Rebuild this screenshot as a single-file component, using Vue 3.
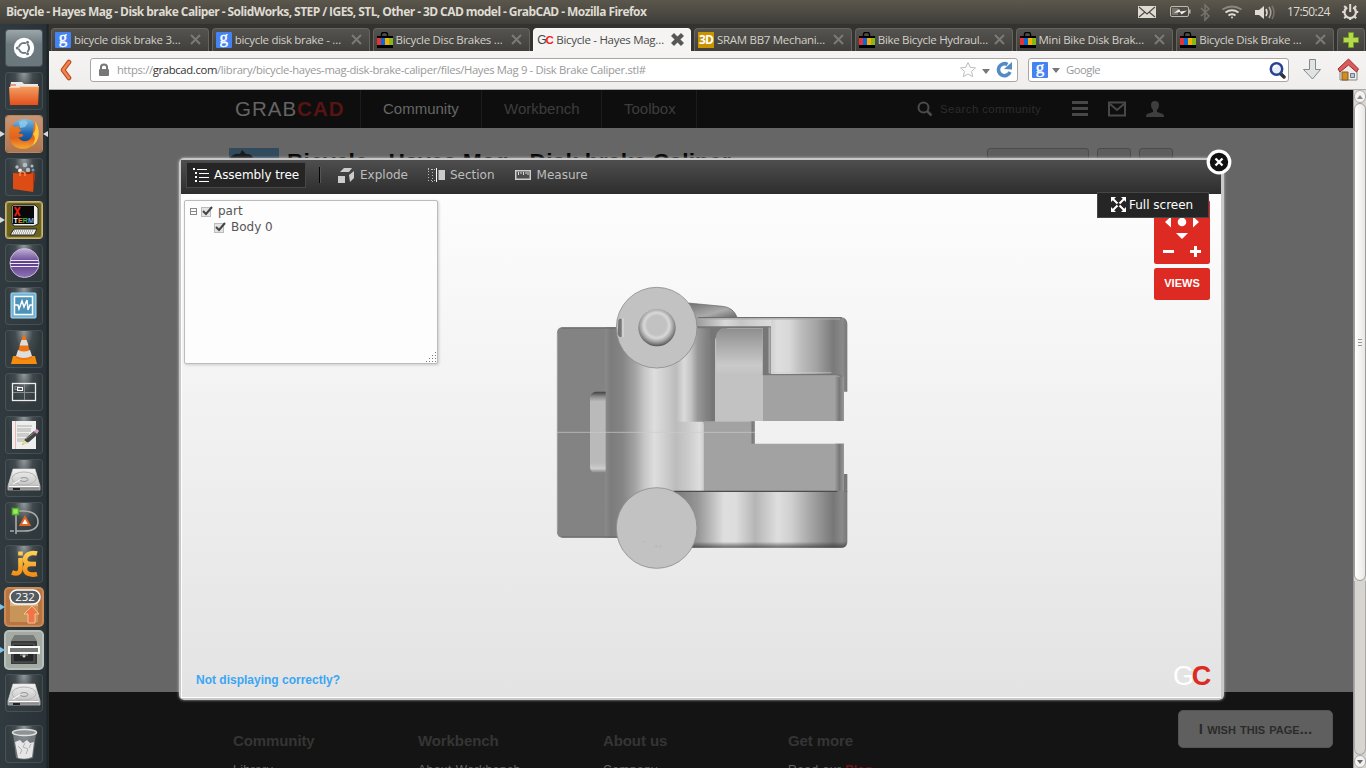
<script setup>
const tabs = [
  { icon: 'g', text: 'bicycle disk brake 3…' },
  { icon: 'g', text: 'bicycle disk brake - …' },
  { icon: 'ebay', text: 'Bicycle Disc Brakes …' },
  { icon: 'gc', text: 'Bicycle - Hayes Mag…', active: true },
  { icon: '3d', text: 'SRAM BB7 Mechani…' },
  { icon: 'ebay', text: 'Bike Bicycle Hydraul…' },
  { icon: 'ebay', text: 'Mini Bike Disk Brak…' },
  { icon: 'ebay', text: 'Bicycle Disk Brake …' },
]

const launcher = [
  { icon: 'ubuntu', tone: 'slate' },
  { icon: 'files' },
  { icon: 'firefox', tone: 'copper', left: 'white', right: true },
  { icon: 'software' },
  { icon: 'xterm', tone: 'olive', left: 'white' },
  { icon: 'eclipse' },
  { icon: 'monitor' },
  { icon: 'vlc' },
  { icon: 'workspace' },
  { icon: 'gedit' },
  { icon: 'disk' },
  { icon: 'librecad' },
  { icon: 'jedit' },
  { icon: 'updates', tone: 'orange', left: 'blue' },
  { icon: 'cabinet', tone: 'pale', left: 'blue' },
  { icon: 'disk' },
  { icon: 'trash', last: true },
]

const footer = [
  { title: 'Community', link: 'Library' },
  { title: 'Workbench', link: 'About Workbench' },
  { title: 'About us', link: 'Company' },
  { title: 'Get more', link: 'Read our', extra: 'Blog' },
]
</script>

<template>
  <div class="desktop">
    <header class="panel">
      <span class="wintitle">Bicycle - Hayes Mag - Disk brake Caliper - SolidWorks, STEP / IGES, STL, Other - 3D CAD model - GrabCAD - Mozilla Firefox</span>
      <svg class="tray" width="228" height="24" viewBox="0 0 228 24">
        <g>
          <rect x="0" y="6" width="18" height="12" fill="#dfdbd2" />
          <path d="M1 7l8 7 8-7M1 17l6-5M17 17l-6-5" fill="none" stroke="#4a4842" stroke-width="1.1" />
        </g>
        <g fill="none" stroke="#bdb9b0">
          <rect x="32.500" y="6.500" width="18" height="10" rx="1.500" />
          <path d="M51.500 9.500v4" stroke-width="2" />
          <rect x="34" y="8" width="6" height="7" fill="#77736b" stroke="none" />
          <path d="M36 13l5-4 1.500 2.500L49 10.500l-5.500 4-1.500-2.500z" fill="#eee" stroke="none" />
        </g>
        <path d="M63 8l8 8-4 4V5l4 4-8 7" fill="none" stroke="#77746a" stroke-width="1.500" />
        <g fill="none" stroke="#dfdbd2" stroke-width="2">
          <path d="M84.500 9.500q9.500-6 19 0" stroke="#8b877e" />
          <path d="M87.500 12.500q6.500-4.500 13 0" />
          <path d="M90.500 15.500q3.500-2.500 7 0" />
          <circle cx="94" cy="17.500" r="1" fill="#dfdbd2" stroke="none" />
        </g>
        <path d="M117 10h4l5-4v13l-5-4h-4z" fill="#dfdbd2" />
        <g fill="none" stroke-width="1.600">
          <path d="M128 9q2 3.500 0 7" stroke="#dfdbd2" />
          <path d="M131 7q3.500 5.500 0 11" stroke="#aaa69d" />
          <path d="M134 6q4 6.500 0 13" stroke="#77746a" />
        </g>
        <g fill="none" stroke="#dfdbd2" transform="translate(.7)">
          <path d="M208.500 7.500a5.700 5.700 0 1 0 6 0" stroke-width="2.200" />
          <path d="M211.500 4v8" stroke-width="2" />
          <path d="M203.500 12h2.500M217 12h2.500M205.500 18.200l2-2M217.500 18.200l-2-2M211.500 20v-2.500M205.500 6l2 2M217.500 6l-2 2" stroke-width="2" />
        </g>
      </svg>
      <time class="clock">17:50:24</time>
    </header>

    <div class="main">
      <nav class="launcher">
        <div v-for="(it, i) in launcher" :key="i" class="tile" :class="[it.tone, { last: it.last }]">
          <i v-if="it.left" class="arrow" :class="it.left"></i>
          <i v-if="it.right" class="arrow-r"></i>
          <svg width="36" height="36" viewBox="0 0 36 36">
            <g v-if="it.icon === 'ubuntu'">
              <circle cx="18" cy="18" r="10.200" fill="#fff" />
              <circle cx="18" cy="18" r="5" fill="none" stroke="#6d7a80" stroke-width="2.200" />
              <g stroke="#fff" stroke-width="1.300"><path d="M18 18h-9M18 18l5 8M18 18l5-8" /></g>
              <circle cx="18" cy="18" r="3.700" fill="#fff" />
              <g fill="#6d7a80"><circle cx="11.300" cy="18" r="1.500" /><circle cx="21.500" cy="12.200" r="1.500" /><circle cx="21.500" cy="23.800" r="1.500" /></g>
            </g>
            <g v-else-if="it.icon === 'files'">
              <path d="M5 9h11l2 2h14v5H4z" fill="#eceae8" />
              <path d="M5 12h5" stroke="#e2472c" />
              <path d="M3 14h10l2-1h18l-1 19H4z" fill="url(#gOrange)" />
              <path d="M3.500 14.500h9.500l2-1h17.500" stroke="#ffd0a4" fill="none" />
            </g>
            <g v-else-if="it.icon === 'firefox'">
              <circle cx="18.500" cy="17" r="14" fill="url(#gBlue)" />
              <path d="M13 6q6-4 9 1l-3 4-5 1z" fill="#9bd3ee" opacity=".7" />
              <path d="M29 6c6 8 5 19-3 24C17 36 5 32 3.500 22 2.500 15 4 11 6 8l2 3 5-1c-1 2 0 3 3 4-1 1-4 2-3 4 3-1 5 1 4 2-2 2-5 1-5 1 3 5 9 6 13 1 3-4 1-8 4-16z" fill="url(#gFox)" />
              <path d="M29 5c6 9 5 20-3 25 3-5 4-8 1-12 3-3 3-8 2-13z" fill="#fcca3c" />
            </g>
            <g v-else-if="it.icon === 'software'">
              <g fill="#b8bcbe"><circle cx="11" cy="8" r="1.700" /><circle cx="19" cy="6" r="2.300" /><circle cx="26" cy="7" r="1.500" /><circle cx="14" cy="11.500" r="2" fill="#eee" /><circle cx="22" cy="11" r="2.200" /><circle cx="27" cy="11" r="1.500" fill="#6d9bc0" /></g>
              <path d="M7 14l20-1 2 2-2 18-20-3z" fill="#dc4c14" />
              <path d="M7 14l20-1-3 2z" fill="#7b280b" />
              <path d="M14 17v-3q2-3 5 0v3" fill="none" stroke="#ff9559" stroke-width="1.300" />
              <path d="M27 14l2 1-2 18z" fill="#a6330a" />
            </g>
            <g v-else-if="it.icon === 'xterm'">
              <path d="M7 3h22l3 3v16l-4 2H8l-2-3V4z" fill="#eee" stroke="#222" />
              <rect x="7" y="4" width="21" height="18" fill="#080808" />
              <path d="M9 5l5 9M14 5l-5 9" stroke="#e81d13" stroke-width="2" />
              <text x="7.500" y="20.500" class="xt"><tspan fill="#fff">T</tspan><tspan fill="#e98b2c">E</tspan><tspan fill="#43b046">R</tspan><tspan fill="#6ca6e0">M</tspan></text>
              <path d="M8 27h23l-3 6H4z" fill="#eee" stroke="#222" />
              <path d="M8 29h20M7 31h20" stroke="#777" stroke-dasharray="1 1" />
            </g>
            <g v-else-if="it.icon === 'eclipse'">
              <circle cx="18.500" cy="18" r="14.500" fill="url(#gPurple)" stroke="#c9b8dc" />
              <path d="M5 15.500h27M4 18.500h29M5 21.500h27" stroke="#eee8f5" stroke-width="1.200" />
            </g>
            <g v-else-if="it.icon === 'monitor'">
              <rect x="5" y="5" width="25" height="25" rx="1" fill="#70b2d4" stroke="#a6dcf4" />
              <rect x="8.500" y="8.500" width="18" height="18" fill="#4c93b9" stroke="#fff" stroke-width="1.500" />
              <path d="M9 17h3l1 4 3-8 2 6 3-7 1 10 2-5h2" fill="none" stroke="#fff" stroke-width="1.500" />
            </g>
            <g v-else-if="it.icon === 'vlc'">
              <path d="M7 25h22l2 8H5z" fill="#f48c0d" />
              <path d="M17 4h2l7 23q-8 4-16 0z" fill="#ee7313" />
              <path d="M15.500 9h5l2 5.500h-9zM12 19q6 3 12 0l2 6q-8 4-16 0z" fill="#dedede" />
            </g>
            <g v-else-if="it.icon === 'workspace'" fill="none" stroke="#c4c6c7">
              <rect x="6.500" y="9.500" width="23" height="17" stroke="#eee" stroke-width="1.300" />
              <path d="M18.500 10v16M7 18.500h22" stroke="#888c8e" />
              <rect x="9" y="12.500" width="4" height="3" stroke="#888" /><rect x="11.500" y="13.500" width="5" height="3" stroke="#fff" />
            </g>
            <g v-else-if="it.icon === 'gedit'">
              <rect x="6" y="4" width="24" height="28" fill="#eeeeec" />
              <path d="M11 9h15M11 12h14M11 14h14M11 17h12M11 19h13M11 22h10M11 24h8" stroke="#999" stroke-width=".8" />
              <path d="M9.500 4v28" stroke="#ef9999" stroke-width=".7" />
              <path d="M16 28l3-6 9-8 4 3-9 8z" fill="#444" /><path d="M16 28l2-5 4 3z" fill="#e8df91" /><path d="M28 14l3-2 2 2-2 3z" fill="#d99bc6" />
              <path d="M20 22l9-7" stroke="#888" />
            </g>
            <g v-else-if="it.icon === 'disk'">
              <path d="M7 9h22l5 17v4H2v-4z" fill="url(#gDisk)" stroke="#ddd" stroke-width=".6" />
              <ellipse cx="18" cy="18.500" rx="12" ry="6.500" fill="none" stroke="#b5b5b5" />
              <ellipse cx="18" cy="19.500" rx="4" ry="2" fill="none" stroke="#999" />
              <path d="M15 19q-4 3-8 5M3 26.500h30" stroke="#fff" fill="none" />
              <path d="M7 29h7" stroke="#222" stroke-width="2" />
            </g>
            <g v-else-if="it.icon === 'librecad'">
              <path d="M10 5v26M10 8h8q14 1 14 10.500T18 28H10M4 28h4M12 8h5" fill="none" stroke="#aaa" stroke-width="1.600" />
              <rect x="6.500" y="5.500" width="6" height="6" fill="#9be86c" stroke="#52b81c" stroke-width="1.500" />
              <path d="M19 14l4.500 8h-9z" fill="#fff" stroke="#df6521" stroke-width="2" />
            </g>
            <g v-else-if="it.icon === 'jedit'" fill="none" stroke="url(#gJe)" stroke-width="4.600">
              <path d="M14.500 12v11q-1 6.500-8.500 3.500" /><path d="M14.500 5.500v4" />
              <path d="M31 7.500c-7-2-12 2-12 6q0 4 5 4.500-5 .5-5 5c0 5 6 6.500 12 5" /><path d="M20 18h10" />
            </g>
            <g v-else-if="it.icon === 'updates'">
              <path d="M4 8h28v25H4z" fill="#c89558" /><path d="M4 8l5-3h18l5 3v9H4z" fill="#dbb37f" />
              <path d="M26 17l7 8h-4v9h-7v-9h-4z" fill="#ef7547" stroke="#fac19b" />
              <rect x="4" y="1" width="30" height="14" rx="7" fill="#555a5f" stroke="#fff" stroke-width="1.500" />
              <text x="19" y="12" class="badge">232</text>
            </g>
            <g v-else-if="it.icon === 'cabinet'">
              <path d="M9 3h18l4 7v22H5V10z" fill="#393b3a" /><path d="M9 3h18l4 6H5z" fill="#777a76" />
              <rect x="7" y="12" width="21" height="18" fill="#252726" stroke="#5a5c5a" />
              <circle cx="18" cy="24" r="1.500" fill="#ddd" /><path d="M14 23h8" stroke="#999" />
              <rect x="3" y="15" width="30" height="6" fill="#777" stroke="#fff" stroke-width="1.900" />
            </g>
            <g v-else>
              <path d="M7 7l3 25q8 3 17 0l3-25z" fill="#a9aeb0" opacity=".5" />
              <ellipse cx="18.500" cy="6.500" rx="12" ry="3" fill="#8d9394" stroke="#e2e2e2" stroke-width="1.500" />
              <path d="M9 16l5-2 3 3 4-3 3 3 4-1-2 15q-6 3-14 1z" fill="#e6e6e6" />
              <path d="M12 20l4 4-2 4M19 17l-2 4 5 2-2 5M25 18l-2 4" fill="none" stroke="#aeb2b2" />
            </g>
          </svg>
        </div>
      </nav>

      <div class="browser">
        <div class="tabs">
          <div v-for="(t, i) in tabs" :key="i" class="tab" :class="{ active: t.active }">
            <span v-if="t.icon === 'g'" class="fav g">g</span>
            <span v-else-if="t.icon === 'gc'" class="fav gcfav">G<b>C</b></span>
            <span v-else-if="t.icon === '3d'" class="fav three">3D</span>
            <svg v-else class="fav" width="16" height="16" viewBox="0 0 16 16">
              <path d="M4.500 5V2.500q0-2 2-2h2q2 0 2 2V5" fill="none" stroke="#000" stroke-width="1.400" />
              <path d="M0 4h16v12H0z" /><path d="M0 6h4v7H0z" fill="#e53238" /><path d="M4 6h4v7H4z" fill="#0968d8" /><path d="M8 6h4v7H8z" fill="#f5af02" /><path d="M12 6h4v7h-4z" fill="#86b817" />
            </svg>
            <span class="label">{{ t.text }}</span>
            <svg class="x" width="13" height="13" viewBox="0 0 13 13">
              <path v-if="t.active" d="M3 3l7 7M10 3l-7 7" stroke="#575757" stroke-width="4.200" stroke-linecap="square" />
              <path v-else d="M2 2l9 9M11 2l-9 9" stroke="#7c7a76" stroke-width="2" />
            </svg>
          </div>
          <div class="newtab">
            <svg width="18" height="18" viewBox="0 0 18 18"><path d="M6.500 1.500h5v5h5v5h-5v5h-5v-5h-5v-5h5z" fill="#b4d84e" stroke="#6f9a1b" /></svg>
          </div>
        </div>

        <div class="nav">
          <svg class="back" width="14" height="22" viewBox="0 0 14 22"><path d="M10 3L4 11l6 8" fill="none" stroke="#b9491c" stroke-width="4.600" stroke-linejoin="round" stroke-linecap="round" /><path d="M10 3L4 11l6 8" fill="none" stroke="#f08650" stroke-width="2.600" stroke-linejoin="round" stroke-linecap="round" /></svg>
          <div class="field url">
            <svg width="12" height="14" viewBox="0 0 12 14"><path d="M3 6V4q0-2.500 3-2.500T9 4v2" fill="none" stroke="#777" stroke-width="2" /><rect x="1" y="6" width="10" height="7" rx="1" fill="#777" /></svg>
            <span class="address">https://<b>grabcad.com</b>/library/bicycle-hayes-mag-disk-brake-caliper/files/Hayes Mag 9 - Disk Brake Caliper.stl#</span>
            <svg class="urlicons" width="54" height="18" viewBox="0 0 54 18">
              <path d="M9 1.500l2.200 4.800 5.300.6-4 3.500 1.200 5.300L9 13l-4.700 2.700 1.200-5.300-4-3.500 5.300-.6z" fill="#fdfdfd" stroke="#bdbdbd" />
              <path d="M23 8h8l-4 5z" fill="#777" />
              <path d="M48.500 3.500A6 6 0 1 0 51 11" fill="none" stroke="#548bc4" stroke-width="3.600" />
              <path d="M45 8l8 .5V1z" fill="#548bc4" />
            </svg>
          </div>
          <div class="field search">
            <span class="fav g">g</span>
            <svg width="8" height="5" viewBox="0 0 8 5"><path d="M0 0h8L4 5z" fill="#777" /></svg>
            <span class="ph">Google</span>
            <svg width="17" height="17" viewBox="0 0 17 17"><path d="M12 12l3 3" stroke="#333" stroke-width="3.500" stroke-linecap="round" /><circle cx="7.500" cy="7" r="5.700" fill="#e7edf7" stroke="#28408f" stroke-width="2.500" /><path d="M4.500 6q1-3 4-2.500" stroke="#fff" fill="none" stroke-width="1.500" /></svg>
          </div>
          <svg class="dl" width="20" height="24" viewBox="0 0 20 24"><path d="M7.500 1.500h6v10h5L10.500 21l-9-9.500h6z" fill="#dfe3e4" stroke="#84898b" stroke-linejoin="round" /></svg>
          <svg class="home" width="24" height="24" viewBox="0 0 24 24">
            <path d="M4 11v11h17V11l-8.500-8z" fill="#ededeb" stroke="#888" />
            <path d="M6 14h6v8H6z" fill="#d28d28" stroke="#8d5c17" /><path d="M14.500 15.500h4v4h-4z" fill="#a9cbe2" stroke="#777" />
            <path d="M12.500 1L2 11l2 3 8.500-7 8 7 2-3z" fill="#d85c5c" stroke="#a42a2e" stroke-linejoin="round" />
          </svg>
        </div>

        <div class="page">
          <div class="content">
            <div class="sitebar">
              <div class="logo"><span>GRAB</span><b>CAD</b></div>
              <a class="item on">Community</a><a class="item wb">Workbench</a><a class="item tb">Toolbox</a>
              <div class="sitesearch">
                <svg width="16" height="16" viewBox="0 0 16 16"><circle cx="6.500" cy="6.500" r="5" fill="none" stroke="#4b4b4b" stroke-width="2" /><path d="M10 10l4.500 4.500" stroke="#4b4b4b" stroke-width="2.500" /></svg>
                <span>Search community</span>
              </div>
              <svg class="siteicons" width="92" height="16" viewBox="0 0 92 16">
                <path d="M0 1.500h16M0 7.500h16M0 13.500h16" stroke="#484848" stroke-width="3" />
                <path d="M37 1.500h16v13H37z" fill="none" stroke="#484848" stroke-width="2" /><path d="M38 3l7 6 7-6" fill="none" stroke="#484848" stroke-width="2" />
                <path d="M83 0q4 0 4 4 0 3-2 5v2l6 2q1 1 1 3H74q0-2 1-3l6-2V9q-2-2-2-5 0-4 4-4z" fill="#3e3e3e" />
              </svg>
            </div>
            <div class="model-head">
              <svg class="thumb" width="50" height="38" viewBox="0 0 50 38"><rect width="50" height="38" rx="1" fill="#314a5c" /><path d="M1 10q4-5 10-4l2-4 4 4q7 0 7 5v10H1z" fill="#17191b" /></svg>
              <h1>Bicycle - Hayes Mag - Disk brake Caliper</h1>
              <div class="ghost"><i class="wide"></i><i></i><i></i></div>
            </div>
            <footer class="foot">
              <section v-for="f in footer" :key="f.title"><h3>{{ f.title }}</h3><p>{{ f.link }} <b v-if="f.extra">{{ f.extra }}</b></p></section>
              <button class="wish">I wish this page...</button>
            </footer>
          </div>
          <div class="scroll">
            <span class="sbtn"><svg width="6" height="4" viewBox="0 0 6 4"><path d="M0 4h6L3 0z" fill="#888" /></svg></span>
            <span class="thumbbar"><i></i><i></i><i></i></span>
            <span class="trough"></span>
            <span class="sbtn"><svg width="6" height="4" viewBox="0 0 6 4"><path d="M0 0h6L3 4z" fill="#666" /></svg></span>
          </div>
        </div>
      </div>
    </div>

    <div class="modal">
      <div class="toolbar">
        <div class="tool on">
          <svg width="17" height="15" viewBox="0 0 17 15"><path d="M0 0h2v2H0zM2 4h2v2H2zM2 8h2v2H2zM2 12h2v2H2z" fill="#fff" /><path d="M4 1.500h10M6 5.500h10M6 9.500h10M6 13.500h10" stroke="#fff" /></svg>
          <span>Assembly tree</span>
        </div>
        <i class="sep"></i>
        <div class="tool ex">
          <svg width="16" height="16" viewBox="0 0 16 16" fill="#ccc"><path d="M0 9h7v7H0zM2 5l4-4h8l-3 4zM11 8l5-4v7l-4 4z" /></svg><span>Explode</span>
        </div>
        <div class="tool se">
          <svg width="17" height="14" viewBox="0 0 17 14"><path d="M0 1.500h8M0 12.500h8M.5 0v14M4.500 1v13" stroke="#bbb" stroke-dasharray="1 2" /><path d="M8.500 0v14" stroke="#fff" /><path d="M10.500 2H17v10h-6.500z" fill="#ccc" /></svg><span>Section</span>
        </div>
        <div class="tool me">
          <svg width="16" height="10" viewBox="0 0 16 10"><rect x=".75" y=".75" width="14.500" height="8.500" fill="#4d4d4d" stroke="#ccc" stroke-width="1.500" /><path d="M3.500 2v3M6 2v2M8.500 2v3M11 2v2M13 2v3" stroke="#ddd" /></svg><span>Measure</span>
        </div>
      </div>
      <div class="viewport">
        <svg class="model" width="330" height="310" viewBox="0 0 990 930">
          <defs>
            <linearGradient id="gOrange" x2="0" y2="1"><stop stop-color="#f3a264" /><stop offset="1" stop-color="#e64f1b" /></linearGradient>
            <linearGradient id="gBlue" x2="0" y2="1"><stop stop-color="#7bc0e6" /><stop offset=".5" stop-color="#2267b1" /><stop offset="1" stop-color="#123a75" /></linearGradient>
            <linearGradient id="gFox" x2="0" y2="1"><stop stop-color="#ef8121" /><stop offset=".6" stop-color="#e2621d" /><stop offset="1" stop-color="#f6a82e" /></linearGradient>
            <linearGradient id="gPurple" x2="0" y2="1"><stop stop-color="#c5b4da" /><stop offset=".5" stop-color="#5a3b8b" /><stop offset="1" stop-color="#8f74b4" /></linearGradient>
            <linearGradient id="gDisk" x2="0" y2="1"><stop stop-color="#f2f2f2" /><stop offset=".75" stop-color="#c6c6c6" /><stop offset="1" stop-color="#777" /></linearGradient>
            <linearGradient id="gJe" gradientUnits="userSpaceOnUse" x1="0" y1="5" x2="0" y2="30"><stop stop-color="#ffd35a" /><stop offset="1" stop-color="#f28c10" /></linearGradient>
            <linearGradient id="cylLow" gradientUnits="userSpaceOnUse" x1="195" x2="491" y1="0" y2="0">
              <stop stop-color="#8a8a8a" /><stop offset=".06" stop-color="#7c7c7c" /><stop offset=".18" stop-color="#858585" /><stop offset=".3" stop-color="#a2a2a2" /><stop offset=".4" stop-color="#c6c6c6" /><stop offset=".5" stop-color="#dedede" /><stop offset=".6" stop-color="#cfcfcf" /><stop offset=".72" stop-color="#bcbcbc" /><stop offset=".85" stop-color="#ccc" /><stop offset=".96" stop-color="#dedede" /><stop offset="1" stop-color="#ccc" />
            </linearGradient>
            <linearGradient id="cylTop" gradientUnits="userSpaceOnUse" x1="195" x2="525" y1="0" y2="0">
              <stop stop-color="#8a8a8a" /><stop offset=".054" stop-color="#7c7c7c" /><stop offset=".161" stop-color="#858585" /><stop offset=".269" stop-color="#a2a2a2" /><stop offset=".359" stop-color="#c6c6c6" /><stop offset=".448" stop-color="#dedede" /><stop offset=".538" stop-color="#cfcfcf" /><stop offset=".646" stop-color="#bcbcbc" /><stop offset=".72" stop-color="#dadada" /><stop offset=".78" stop-color="#c4c4c4" /><stop offset=".84" stop-color="#999" /><stop offset=".93" stop-color="#808080" /><stop offset="1" stop-color="#777" />
            </linearGradient>
            <linearGradient id="cylRight" gradientUnits="userSpaceOnUse" x1="690" x2="922" y1="0" y2="0">
              <stop stop-color="#cfcfcf" /><stop offset=".1" stop-color="#dedede" /><stop offset=".25" stop-color="#d8d8d8" /><stop offset=".4" stop-color="#bdbdbd" /><stop offset=".6" stop-color="#a3a3a3" /><stop offset=".82" stop-color="#7a7a7a" /><stop offset=".94" stop-color="#8a8a8a" /><stop offset="1" stop-color="#777" />
            </linearGradient>
            <linearGradient id="cylBottom" gradientUnits="userSpaceOnUse" x1="400" x2="922" y1="0" y2="0">
              <stop stop-color="#777" /><stop offset=".14" stop-color="#969696" /><stop offset=".22" stop-color="#bcbcbc" /><stop offset=".29" stop-color="#dedede" /><stop offset=".36" stop-color="#ddd" /><stop offset=".47" stop-color="#b5b5b5" /><stop offset=".53" stop-color="#c8c8c8" /><stop offset=".6" stop-color="#dedede" /><stop offset=".68" stop-color="#cfcfcf" /><stop offset=".78" stop-color="#a9a9a9" /><stop offset=".92" stop-color="#777" /><stop offset=".97" stop-color="#8a8a8a" /><stop offset="1" stop-color="#777" />
            </linearGradient>
            <linearGradient id="band" gradientUnits="userSpaceOnUse" x1="460" x2="700" y1="0" y2="0"><stop stop-color="#959595" /><stop offset=".4" stop-color="#d8d8d8" /><stop offset=".6" stop-color="#c6c6c6" /><stop offset="1" stop-color="#dedede" /></linearGradient>
            <linearGradient id="pocket" x2="0" y2="1"><stop stop-color="#8e8e8e" /><stop offset=".15" stop-color="#a5a5a5" /><stop offset=".4" stop-color="#cacaca" /><stop offset=".5" stop-color="#c2c2c2" /></linearGradient>
            <linearGradient id="slot" x2="0" y2="1"><stop stop-color="#3f3f3f" /><stop offset=".06" stop-color="#8a8a8a" /><stop offset=".12" stop-color="#bababa" /><stop offset=".88" stop-color="#bababa" /><stop offset=".95" stop-color="#cdcdcd" /><stop offset="1" stop-color="#858585" /></linearGradient>
            <linearGradient id="knob" x2="1" y2="1"><stop stop-color="#6f6f6f" /><stop offset=".6" stop-color="#ababab" /><stop offset="1" stop-color="#666" /></linearGradient>
            <radialGradient id="ball" gradientUnits="userSpaceOnUse" cx="350" cy="166" r="64"><stop offset=".45" stop-color="#c2c2c2" /><stop offset=".6" stop-color="#d8d8d8" /><stop offset=".76" stop-color="#a8a8a8" /><stop offset=".9" stop-color="#757575" /><stop offset="1" stop-color="#484848" /></radialGradient>
            <linearGradient id="shadeR" x2="1"><stop stop-color="#a2a2a2" /><stop offset=".5" stop-color="#777" /><stop offset="1" stop-color="#999" /></linearGradient>
            <linearGradient id="shadeB" x2="0" y2="1"><stop stop-color="#333" stop-opacity="0" /><stop offset="1" stop-color="#333" stop-opacity=".7" /></linearGradient>
          </defs>
          <path d="M240 172H68q-17 0-17 17v597q0 17 17 17h172z" fill="#838383" />
          <path d="M52 190v595" fill="none" stroke="#a5a5a5" stroke-width="3" />
          <path d="M195 172h330v288H195z" fill="url(#cylTop)" />
          <path d="M195 455h296v208H410v140H195z" fill="url(#cylLow)" />
          <path d="M64 174h182M64 801h180" stroke="#666" stroke-width="3.500" />
          <path d="M197 365h-30q-17 3-17 20v206q0 17 17 17h30z" fill="url(#slot)" />
          <path d="M445 99l103 10q32 3 44 34H445z" fill="url(#knob)" stroke="#666" stroke-width="2" />
          <path d="M690 142h215q17 3 17 20v203h-10v88H690z" fill="url(#cylRight)" />
          <path d="M440 142h254v30H440z" fill="url(#band)" />
          <path d="M475 143h430" stroke="#6e6e6e" stroke-width="4" /><path d="M475 147h425" stroke="#aaa" stroke-width="3" />
          <path d="M510 172h50v40h-50z" fill="#777" />
          <path d="M470 172h222" stroke="#777" stroke-width="6" />
          <path d="M527 453V205q2-22 18-30h123v278z" fill="url(#pocket)" />
          <path d="M519 180v273" stroke="#767676" stroke-width="10" /><path d="M527 205v248" stroke="#bcbcbc" stroke-width="3" />
          <path d="M668 170h24v143h-24z" fill="#777" /><path d="M688 172v138" stroke="#aaa" stroke-width="5" />
          <path d="M668 313h218q20 0 20 20v120H668z" fill="#a2a2a2" />
          <path d="M884 320h28v133h-28z" fill="url(#shadeR)" />
          <path d="M694 308h180" stroke="#ccc" stroke-width="3" opacity=".6" /><path d="M668 314h220q13 1 17 6" fill="none" stroke="#6e6e6e" stroke-width="3" />
          <path d="M400 663h522v153q0 17-17 17H400z" fill="url(#cylBottom)" />
          <path d="M912 612h10v54h-10z" fill="#777" />
          <path d="M491 454h154v67h267v142H491z" fill="#a2a2a2" />
          <path d="M631 454h14v67h-14z" fill="url(#shadeR)" /><path d="M884 521h28v142h-28z" fill="url(#shadeR)" />
          <path d="M400 664h492" stroke="#4c4c4c" stroke-width="3.500" />
          <path d="M445 815h476q-1 18-17 18H445z" fill="url(#shadeB)" />
          <path d="M50 487h595" stroke="#ccc" stroke-width="2" />
          <circle cx="350" cy="173" r="121" fill="#c2c2c2" stroke="#8d8d8d" stroke-width="2.500" />
          <path d="M235 150q5-8 10-2v52q-10 4-12-10z" fill="#777" /><path d="M249 145v57" stroke="#d0d0d0" stroke-width="6" />
          <circle cx="351" cy="173" r="56" fill="url(#ball)" />
          <circle cx="350" cy="774" r="121" fill="#c2c2c2" stroke="#8d8d8d" stroke-width="2.500" />
          <path d="M310 815h5M345 829h7M358 829h6" stroke="#aaa" stroke-width="2" />
        </svg>
        <div class="tree">
          <div class="row"><i class="minus"></i><i class="check"><svg width="12" height="11" viewBox="0 0 12 11"><path d="M2 5l3 3 6-7" fill="none" stroke="#444" stroke-width="2" /></svg></i><span>part</span></div>
          <div class="row child"><i class="check"><svg width="12" height="11" viewBox="0 0 12 11"><path d="M2 5l3 3 6-7" fill="none" stroke="#444" stroke-width="2" /></svg></i><span>Body 0</span></div>
          <svg class="grip" width="11" height="11" viewBox="0 0 11 11"><path d="M9.500 0v11M6.500 3v8M3.500 6v5M.5 9v2" stroke="#777" stroke-dasharray="1 2" /></svg>
        </div>
        <div class="controls">
          <svg class="pad" width="56" height="64" viewBox="0 0 56 64"><rect width="56" height="64" rx="2.500" fill="#dd2b24" /><path d="M11 22l6-5.500v11zM45 22l-6-5.500v11zM22 33h12l-6 6z" fill="#fff" /><circle cx="28" cy="22" r="4.300" fill="#fff" /><path d="M9 51.500h11M36 51.500h11M41.500 46v11" stroke="#fff" stroke-width="3" /></svg>
          <div class="views">VIEWS</div>
        </div>
        <div class="full"><svg width="15" height="15" viewBox="0 0 15 15"><path d="M1 1l13 13M14 1L1 14" stroke="#fff" stroke-width="2" /><path d="M0 0h5L0 5zM15 0v5l-5-5zM0 15v-5l5 5zM15 15h-5l5-5z" fill="#fff" /><path d="M5.500 7.500l2-2 2 2-2 2z" fill="#262626" /></svg><span>Full screen</span></div>
        <a class="help">Not displaying correctly?</a>
        <div class="mark">G<b>C</b></div>
      </div>
      <svg class="close" width="26" height="26" viewBox="0 0 26 26"><circle cx="13" cy="13" r="10.800" fill="#111" stroke="#fff" stroke-width="3.200" /><path d="M9.500 9.500l7 7M16.500 9.500l-7 7" stroke="#fff" stroke-width="2.300" /></svg>
    </div>
  </div>
</template>

<style>
html, body { margin: 0; overflow: hidden; }
</style>

<style scoped>
* { box-sizing: border-box; }
.desktop { position: relative; width: 1366px; height: 768px; display: flex; flex-direction: column; overflow: hidden; font-family: "Open Sans", "Noto Sans", sans-serif; background: #666; }
.panel { height: 24px; flex: none; display: flex; align-items: center; padding-left: 6px; background: linear-gradient(#5b574c, #3e3d39); color: #dfdbd2; position: relative; white-space: nowrap; }
.wintitle { flex: 1; font-size: 12px; font-weight: 700; letter-spacing: -0.57px; line-height: 24px; }
.tray { flex: none; }
.clock { position: absolute; left: 1287px; top: 0; font-size: 12px; line-height: 24px; letter-spacing: -0.6px; }
.main { flex: 1; min-height: 0; display: flex; }
.launcher { width: 49px; flex: none; background: linear-gradient(90deg, #313b3f, #293236 94%, #1c2325 96%, #262d30); padding: 6px 0 0 6px; display: flex; flex-direction: column; gap: 7px; }
.tile { position: relative; width: 36px; height: 36px; flex: none; border-radius: 3px; background: radial-gradient(ellipse at 50% 0, rgba(200,207,210,.65), rgba(90,97,100,.45) 35%, rgba(60,68,71,.3) 65%); box-shadow: 0 0 0 1px rgba(110,120,125,.4); }
.tile svg { display: block; }
.tile.slate { background: linear-gradient(#9ca7ab, #6d7a80 40%, #6a777d); }
.tile.copper { background: linear-gradient(#c99674, #b0764e); box-shadow: 0 0 0 1px #b98664; }
.tile.olive { background: #6a641f; box-shadow: inset 0 0 0 1px #b09b57, 0 0 0 1px #cbb574; }
.tile.orange { background: #b87542; box-shadow: 0 0 0 2px #c98b58; }
.tile.pale { background: #a4aba5; box-shadow: 0 0 0 2px #b9c0ba; }
.tile.last { margin-top: 8px; }
.arrow { position: absolute; left: -6px; top: 15px; border: solid transparent; border-width: 3px 0 3px 5px; border-left-color: #d8dbdc; }
.arrow.blue { border-left-color: #7cc4e8; }
.arrow-r { position: absolute; left: 37px; top: 15px; border: solid transparent; border-width: 3px 5px 3px 0; border-right-color: #d8dbdc; }
.xt { font: 700 7.2px "Liberation Sans", sans-serif; }
.badge { font: 11.5px "Open Sans", sans-serif; fill: #fff; text-anchor: middle; }
.browser { flex: 1; min-width: 0; display: flex; flex-direction: column; }
.tabs { height: 27px; flex: none; background: #34332f; padding: 4px 1px 0 2px; display: flex; gap: 3px; }
.tab { flex: 1; min-width: 0; height: 23px; border-radius: 4px 4px 0 0; border: 1px solid #66645f; border-bottom: 0; background: linear-gradient(#55534f, #403f3b); color: #d3d0c9; display: flex; align-items: center; padding: 0 6px 1px 3px; font-size: 11.5px; white-space: nowrap; }
.tab.active { background: #f5f4f2; border-color: #fafafa; color: #4a4a4a; }
.label { flex: 1; min-width: 0; margin-left: 3px; letter-spacing: -0.3px; }
.x { flex: none; }
.fav { flex: none; width: 16px; height: 16px; display: block; text-align: center; }
.g { background: #4583f1; border-radius: 1px; color: #fff; font: 17px/12px "Liberation Serif", serif; -webkit-text-stroke: .4px #fff; }
.gcfav { font: 12px/16px "Liberation Sans", sans-serif; letter-spacing: -1px; color: #444; text-align: left; }
.gcfav b { color: #e22; font-size: 11.5px; }
.three { background: #cb9300; color: #fff; font: 700 12px/16px "Open Sans", sans-serif; letter-spacing: -0.8px; }
.newtab { width: 28px; flex: none; border-radius: 4px 4px 0 0; border: 1px solid #66645f; border-bottom: 0; background: linear-gradient(#55534f, #403f3b); display: grid; place-items: center; }
.nav { height: 39px; flex: none; display: flex; align-items: center; background: linear-gradient(#f5f4f2, #efeeec); border-bottom: 1px solid #aaa; padding: 0 6px 0 10px; }
.field { height: 24px; border: 1px solid #a9a6a2; border-radius: 3px; background: #fff; display: flex; align-items: center; font-size: 11.3px; white-space: nowrap; }
.url { width: 928px; margin-left: 17px; padding: 0 4px 0 7px; color: #999; }
.address { flex: 1; margin-left: 7px; letter-spacing: -0.35px; padding-bottom: 1px; }
.address b { font-weight: 400; color: #333; }
.search { width: 261px; margin-left: 10px; padding: 0 2px 0 3px; }
.search svg { margin-left: 4px; }
.ph { flex: 1; margin-left: 6px; color: #999; letter-spacing: -0.5px; padding-bottom: 1px; }
.dl { margin-left: 13px; }
.home { margin-left: 14px; flex: none; }
.page { flex: 1; min-height: 0; display: flex; }
.content { flex: 1; background: #666; display: flex; flex-direction: column; font-family: "Liberation Sans", Arial, sans-serif; }
.sitebar { height: 38px; flex: none; background: #0e0e0e; display: flex; align-items: center; }
.logo { width: 125px; margin-left: 186px; font: 20.5px/38px "Liberation Sans", sans-serif; color: #646464; letter-spacing: 1px; white-space: nowrap; }
.logo b { color: #581313; }
.item { height: 38px; width: 120px; flex: none; border-left: 1px solid #1c1c1c; padding-left: 22px; font-size: 15px; line-height: 37px; color: #3d3d3d; }
.item.on { color: #666; width: 121px; }
.item.tb { width: 96px; border-right: 1px solid #1c1c1c; }
.sitesearch { margin-left: 220px; width: 155px; display: flex; align-items: center; gap: 7px; color: #2c2c2c; font-size: 11.5px; letter-spacing: .37px; white-space: nowrap; }
.siteicons { flex: none; }
.model-head { flex: 1; display: flex; align-items: flex-start; padding: 20px 0 0 180px; }
.model-head h1 { margin: 0 0 0 8px; width: 700px; font-size: 22.8px; line-height: 26px; color: #050505; letter-spacing: .14px; white-space: nowrap; }
.ghost { display: flex; gap: 8px; }
.ghost i { width: 34px; height: 30px; border: 1px solid #4b4b4b; border-radius: 3px; background: #5e5e5e; }
.ghost .wide { width: 102px; }
.foot { height: 76px; flex: none; background: #141414; display: flex; padding: 40px 0 0 184px; position: relative; overflow: hidden; }
.foot section { width: 185px; flex: none; }
.foot h3 { margin: 0; font-size: 15px; line-height: 18px; letter-spacing: -0.1px; color: #353535; }
.foot p { margin: 12px 0 0; font-size: 12px; line-height: 16px; letter-spacing: .5px; color: #666; }
.foot p b { color: #701414; letter-spacing: 0; }
.wish { position: absolute; right: 20px; top: 18px; width: 155px; height: 38px; border: 1px solid #545454; border-radius: 5px; background: #5f5f5f; color: #2b2b2b; font: 700 small-caps 15px "Liberation Sans", sans-serif; padding: 0 0 2px; white-space: nowrap; }
.scroll { width: 13px; flex: none; background: #d8d5d1; border-left: 1px solid #999; display: flex; flex-direction: column; }
.sbtn { height: 13px; flex: none; background: #f3f2f0; border: 1px solid #aaa; border-radius: 6px; display: grid; place-items: center; }
.thumbbar { height: 478px; flex: none; border: 1px solid #a09d99; border-radius: 6px; background: linear-gradient(90deg, #fff, #e8e7e5); display: flex; flex-direction: column; gap: 2px; align-items: center; justify-content: center; }
.thumbbar i { width: 4px; height: 1px; background: #999; }
.trough { flex: 1; border: 1px solid #aaa; border-top: 0; border-radius: 0 0 6px 6px; }
.modal { position: absolute; left: 179px; top: 158px; width: 1045px; height: 542px; border: 2px solid #c8c8c8; border-right-width: 3px; border-radius: 5px; display: flex; flex-direction: column; box-shadow: 0 0 3px rgba(230,230,230,.75); font-family: "DejaVu Sans", sans-serif; }
.toolbar { height: 34px; flex: none; background: linear-gradient(#4e4e4e, #2d2d2d); display: flex; align-items: center; padding: 0 0 5px 5px; color: #bdbdbd; font-size: 12px; }
.tool { display: flex; align-items: center; white-space: nowrap; }
.tool.on { width: 120px; height: 26px; margin-top: 1px; background: #252525; border: 1px solid #464646; color: #fff; padding-left: 6px; gap: 4px; letter-spacing: -0.05px; }
.sep { width: 2px; height: 16px; margin-left: 13px; background: #050505; border-right: 1px solid #555; }
.ex { margin-left: 17px; gap: 6px; }
.se { margin-left: 20px; gap: 5px; }
.me { margin-left: 20px; gap: 6px; }
.viewport { flex: 1; position: relative; background: linear-gradient(#fdfdfd, #e3e3e3); border-left: 1px solid #fff; border-bottom: 1px solid #fff; }
.model { position: absolute; left: 358px; top: 76px; }
.tree { position: absolute; left: 2px; top: 6px; width: 254px; height: 164px; border: 1px solid #bcbcbc; border-radius: 2px; background: #fdfdfd; box-shadow: 1px 1px 3px rgba(0,0,0,.18); padding: 2px 0 0 5px; font-size: 12px; color: #555; }
.row { height: 16px; display: flex; align-items: center; }
.row.child { padding-left: 24px; }
.minus { width: 7px; height: 7px; border: 1px solid #888; background: linear-gradient(#888, #888) center / 5px 1px no-repeat; margin: 0 4px 0 0; }
.check { width: 10px; height: 10px; border: 1px solid #bbb; background: #e4e4e4; margin: 1px 7px 0 0; }
.check svg { display: block; margin: -2px 0 0 -1px; }
.grip { position: absolute; right: 0; bottom: 0; }
.controls { position: absolute; left: 972px; top: 6px; display: flex; flex-direction: column; gap: 4px; }
.views { width: 56px; height: 32px; border-radius: 2.500px; background: #dd2b24; color: #fff; font: 700 11px/31px "Liberation Sans", sans-serif; text-align: center; }
.full { position: absolute; left: 915px; top: -2px; width: 112px; height: 26px; background: #252525; border: 1px solid #464646; display: flex; align-items: center; gap: 3px; padding: 0 0 1px 13px; color: #fff; font-size: 12px; white-space: nowrap; }
.help { position: absolute; left: 14px; bottom: 9px; font: 700 12px/16px "Liberation Sans", sans-serif; color: #3aa6f5; }
.mark { position: absolute; right: 12px; bottom: 4px; font: 27px/34px "Liberation Sans", sans-serif; color: #fff; letter-spacing: -2.2px; }
.mark b { color: #dd2b24; }
.close { position: absolute; left: 1024.500px; top: -11px; }
</style>
